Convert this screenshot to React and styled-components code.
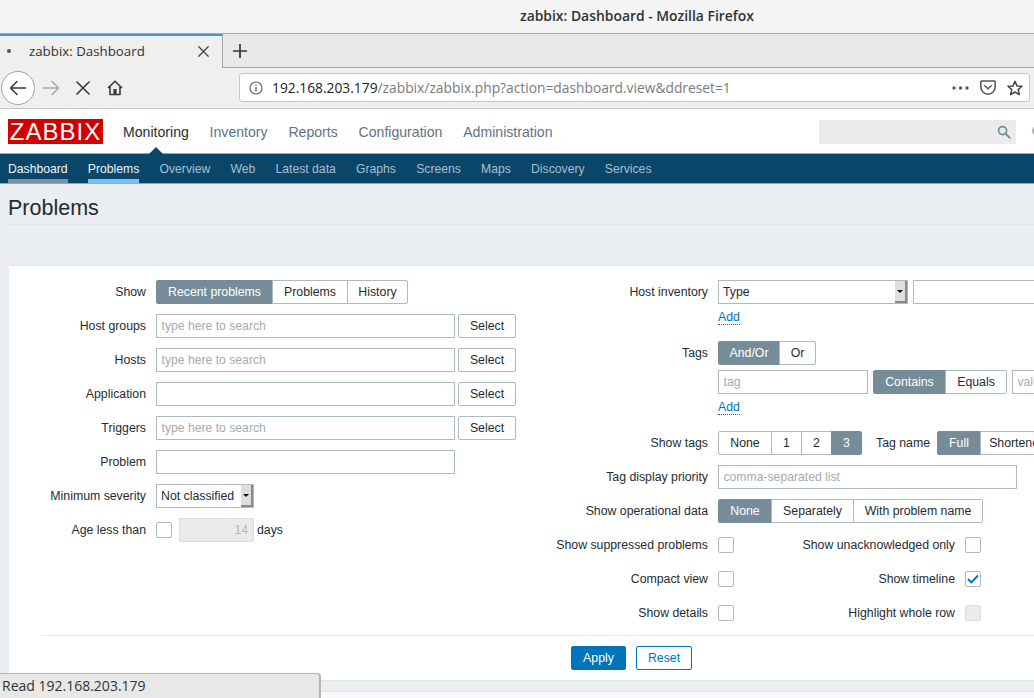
import React from 'react';
import styled, { createGlobalStyle } from 'styled-components';

const GlobalStyle = createGlobalStyle`
  html, body {
    margin: 0;
    padding: 0;
    overflow: hidden;
    background: #fff;
  }
  * {
    box-sizing: border-box;
  }
`;

const chromeFont = '"Open Sans", "Noto Sans", sans-serif';
const pageFont = '"Liberation Sans", Arial, sans-serif';

const Window = styled.div`
  position: relative;
  width: 1034px;
  height: 698px;
  overflow: hidden;
  font-family: ${pageFont};
  font-size: 12.3px;
  color: #1f2c33;
  background: #fff;
`;

/* browser chrome */
const TitleBar = styled.div`
  height: 34px;
  padding: 0 0 2px 520px;
  display: flex;
  align-items: center;
  background: #f5f5f5;
  border-bottom: 1px solid #a8a8a6;
  font-family: ${chromeFont};
  font-size: 13.9px;
  font-weight: 600;
  color: #2e3436;
  white-space: nowrap;
`;

const TabStrip = styled.div`
  height: 34px;
  display: flex;
  background: #e8e8e6;
  border-bottom: 1px solid #a8a8a6;
  font-family: ${chromeFont};
`;

const Tab = styled.div`
  width: 223px;
  height: 34px;
  padding: 0 13px 2px 7px;
  display: flex;
  align-items: center;
  background: #efefed;
  border-top: 2px solid #4a90d9;
  border-right: 1px solid #a8a8a6;
  font-size: 13.3px;
  color: #2e3436;
`;

const TabDot = styled.span`
  width: 4px;
  height: 4px;
  margin-right: 18px;
  border-radius: 50%;
  background: #555;
`;

const TabTitle = styled.span`
  flex: 1;
`;

const NewTab = styled.div`
  width: 34px;
  display: flex;
  align-items: center;
  justify-content: center;
`;

const Toolbar = styled.div`
  height: 41px;
  padding: 0 4px 1px 1px;
  display: flex;
  align-items: center;
  background: #efefed;
  border-bottom: 1px solid #c6c6c4;
  font-family: ${chromeFont};
`;

const BackButton = styled.div`
  width: 34px;
  height: 34px;
  display: flex;
  align-items: center;
  justify-content: center;
  background: #fff;
  border: 1px solid #a3a3a1;
  border-radius: 50%;
`;

const ToolIcon = styled.div`
  display: flex;
  align-items: center;
  justify-content: center;
  width: ${(p) => p.$w}px;
  height: 30px;
`;

const UrlBar = styled.div`
  width: 791px;
  height: 29px;
  margin-left: 108px;
  padding: 0 6px 0 9px;
  display: flex;
  align-items: center;
  background: #fff;
  border: 1px solid #c6c6c4;
  border-radius: 3px;
  font-size: 13.8px;
`;

const UrlText = styled.span`
  flex: 1;
  margin-left: 9px;
  color: #7b7b7b;
  white-space: nowrap;
`;

const UrlHost = styled.span`
  color: #222;
`;

const UrlIcons = styled.div`
  display: flex;
  align-items: center;
  gap: 11px;
`;

const StatusBar = styled.div`
  position: absolute;
  left: 0;
  bottom: 0;
  width: 321px;
  height: 25px;
  padding: 0 0 1px 2px;
  display: flex;
  align-items: center;
  background: #e8e8e6;
  border-top: 1px solid #b5b5b3;
  border-right: 2px solid #b5b5b3;
  border-top-right-radius: 4px;
  font-family: ${chromeFont};
  font-size: 14px;
  color: #2e3436;
`;

/* zabbix header */
const Header = styled.div`
  position: relative;
  height: 45px;
  padding: 10px 0 0 8px;
  display: flex;
  align-items: flex-start;
  background: #fff;
  border-bottom: 1px solid #8fa9b8;
`;

const Logo = styled.div`
  width: 95px;
  height: 25px;
  display: flex;
  align-items: center;
  justify-content: center;
  background: #d40000;
  color: #fff;
  font-size: 24px;
  letter-spacing: 1px;
  line-height: 25px;
`;

const MainNav = styled.nav`
  margin-left: 20px;
  height: 25px;
  display: flex;
  align-items: center;
  gap: 20.8px;
`;

const MainLink = styled.span`
  position: relative;
  font-size: 14.1px;
  color: ${(p) => (p.$active ? '#1f2c33' : '#5d7482')};

  ${(p) =>
    p.$active &&
    `&::after {
      content: '';
      position: absolute;
      left: 50%;
      bottom: -15px;
      margin-left: -8px;
      border-left: 8px solid transparent;
      border-right: 8px solid transparent;
      border-bottom: 8px solid #0a466a;
    }`}
`;

const SearchBox = styled.div`
  position: absolute;
  left: 819px;
  top: 11px;
  width: 197px;
  height: 24px;
  padding-right: 5px;
  display: flex;
  align-items: center;
  justify-content: flex-end;
  background: #ebebeb;
`;

const CutIcon = styled.div`
  position: absolute;
  left: 1032px;
  top: 17px;
  width: 10px;
  height: 10px;
  border: 2px solid #a3b3bc;
  border-radius: 50%;
`;

const SubNav = styled.nav`
  height: 30px;
  padding-left: 8px;
  display: flex;
  gap: 20.2px;
  background: #0a466a;
  border-bottom: 1px solid #8fa9b8;
`;

const SubLink = styled.span`
  height: 29px;
  padding-top: 8px;
  font-size: 12.2px;
  color: ${(p) => (p.$state ? '#f0f4f6' : '#a7bfcd')};
  border-bottom: 4px solid
    ${(p) => (p.$state === 'selected' ? '#78c1f1' : p.$state === 'home' ? '#7894a6' : 'transparent')};
`;

/* page */
const Page = styled.div`
  height: 515px;
  padding-left: 8px;
  background: #ebeef0;
`;

const PageTitle = styled.h1`
  height: 41px;
  margin: 0 0 40px;
  padding-top: 12px;
  border-bottom: 1px solid #e2e6e8;
  font-size: 21.5px;
  font-weight: 400;
  line-height: 24px;
  color: #1f2c33;
`;

const Panel = styled.div`
  width: 1245px;
  margin-left: 1px;
  height: 416px;
  padding-top: 14px;
  background: #fff;
  border-top: 1px solid #dfe4e7;
  border-bottom: 1px solid #dfe4e7;
`;

const Columns = styled.div`
  display: flex;
`;

const Column = styled.div`
  width: ${(p) => p.$w}px;
  flex: none;
  display: flex;
  flex-direction: column;
  gap: 10px;
`;

const Row = styled.div`
  display: flex;
  align-items: flex-start;
`;

const Label = styled.div`
  flex: none;
  width: ${(p) => p.$w}px;
  height: 24px;
  margin-right: 10px;
  text-align: right;
  line-height: 24px;
  white-space: nowrap;
`;

const TagLabel = styled(Label)`
  margin-right: 7px;
`;

const Stack = styled.div`
  display: flex;
  flex-direction: column;
`;

const Line = styled.div`
  display: flex;
  align-items: center;
  gap: ${(p) => p.$gap || 0}px;
  margin-top: ${(p) => p.$top || 0}px;
  height: 24px;
`;

const AddLine = styled.div`
  height: 27px;
  padding-top: 6px;
`;

const AddLink = styled.a`
  color: #0275b8;
  line-height: 14px;
  display: inline-block;
  border-bottom: 1px dotted #0275b8;
`;

const TextInput = styled.input`
  width: ${(p) => p.$w}px;
  height: 24px;
  padding: 0 4.5px;
  flex: none;
  background: #fff;
  border: 1px solid #acbbc2;
  border-radius: 0;
  outline: none;
  font-family: ${pageFont};
  font-size: 12.2px;
  color: #1f2c33;

  &::placeholder {
    color: #a5abae;
    opacity: 1;
  }
`;

const NumberInput = styled(TextInput)`
  margin-left: 7px;
  text-align: right;
  padding-right: 5px;
  background: #ebebeb;
  border-color: #dcdfe1;
  color: #acbbc2;
`;

const Button = styled.button`
  flex: none;
  height: 24px;
  padding: 0;
  width: ${(p) => p.$w}px;
  background: ${(p) => (p.$primary ? '#0275b8' : '#fff')};
  border: 1px solid ${(p) => (p.$primary ? '#0275b8' : p.$blue ? '#0275b8' : '#acbbc2')};
  border-radius: 2px;
  font-family: ${pageFont};
  font-size: 12.3px;
  color: ${(p) => (p.$primary ? '#fff' : p.$blue ? '#0275b8' : '#1f2c33')};
`;

const SelectButton = styled(Button)`
  margin-left: 3px;
`;

const Segments = styled.div`
  display: flex;
  flex: none;
`;

const Segment = styled.span`
  width: ${(p) => p.$w}px;
  height: 24px;
  flex: none;
  display: flex;
  align-items: center;
  justify-content: center;
  background: ${(p) => (p.$active ? '#768d99' : '#fff')};
  color: ${(p) => (p.$active ? '#fff' : '#1f2c33')};
  border: 1px solid ${(p) => (p.$active ? '#768d99' : '#acbbc2')};
  margin-left: -1px;
  white-space: nowrap;

  &:first-child {
    margin-left: 0;
    border-radius: 2px 0 0 2px;
  }
  &:last-child {
    border-radius: 0 2px 2px 0;
  }
`;

const Select = styled.div`
  width: ${(p) => p.$w}px;
  height: 24px;
  flex: none;
  padding-left: 4px;
  display: flex;
  align-items: center;
  justify-content: space-between;
  background: #fff;
  border: 1px solid #acbbc2;
`;

const SelectArrow = styled.span`
  position: relative;
  width: 12px;
  height: 22px;
  flex: none;
  background: #dedede;
  border-right: 2px solid #8a8a8a;
  border-bottom: 2px solid #8a8a8a;

  &::after {
    content: '';
    position: absolute;
    left: 2px;
    top: 9px;
    border-left: 3px solid transparent;
    border-right: 3px solid transparent;
    border-top: 3px solid #111;
  }
`;

const Checkbox = styled.span`
  width: 16px;
  height: 16px;
  flex: none;
  display: flex;
  align-items: center;
  justify-content: center;
  background: ${(p) => (p.$disabled ? '#ebebeb' : '#fff')};
  border: 1px solid ${(p) => (p.$disabled ? '#dcdfe1' : '#acbbc2')};
  border-radius: 2px;
`;

const CheckCell = styled.div`
  height: 24px;
  width: ${(p) => p.$w || 16}px;
  flex: none;
  display: flex;
  align-items: center;
`;

const Days = styled.span`
  margin-left: 3px;
`;

const Separator = styled.div`
  margin: 10px 0 0 32px;
  border-top: 1px solid #ebeef0;
`;

const Actions = styled.div`
  padding-top: 10px;
  display: flex;
  justify-content: center;
  gap: 10px;
`;

const Footer = styled.div`
  height: 8px;
  margin: 10px 0 0 -8px;
  background: #f8f9fa;
  border-top: 1px solid #dfe4e7;
`;

const Line2 = (props) => <svg fill="none" strokeLinecap="round" strokeLinejoin="round" {...props} />;

const ArrowLeftIcon = () => (
  <Line2 width="18" height="16" viewBox="0 0 18 16" stroke="#3a3a3a" strokeWidth="1.6">
    <path d="M16.5 8H1.5M8 1.5 1.5 8 8 14.5" />
  </Line2>
);

const ArrowRightIcon = () => (
  <Line2 width="18" height="16" viewBox="0 0 18 16" stroke="#a9a9a9" strokeWidth="1.6">
    <path d="M1.5 8h15M10 1.5 16.5 8 10 14.5" />
  </Line2>
);

const CrossIcon = ({ size = 14, color = '#3a3a3a' }) => (
  <Line2 width={size} height={size} viewBox="0 0 14 14" stroke={color} strokeWidth="1.6">
    <path d="M1 1l12 12M13 1 1 13" />
  </Line2>
);

const HomeIcon = () => (
  <svg width="16" height="16" viewBox="0 0 16 16" fill="none" stroke="#3a3a3a" strokeWidth="1.6" strokeLinejoin="round">
    <path d="M1 8 8 1.2 15 8M3 6.5V14.5H13V6.5" />
    <rect x="6.4" y="9" width="3.2" height="5.5" fill="#3a3a3a" stroke="none" />
  </svg>
);

const PlusIcon = () => (
  <svg width="14" height="14" viewBox="0 0 14 14" stroke="#333" strokeWidth="1.7">
    <path d="M7 0v14M0 7h14" />
  </svg>
);

const InfoIcon = () => (
  <svg width="14" height="14" viewBox="0 0 14 14" fill="none" stroke="#6a6a6a" strokeWidth="1.2">
    <circle cx="7" cy="7" r="6" />
    <path d="M7 6v4.4M7 3.4v1.4" strokeWidth="1.4" />
  </svg>
);

const DotsIcon = () => (
  <svg width="17" height="4" viewBox="0 0 17 4" fill="#5a5a5a">
    <circle cx="2" cy="2" r="1.7" />
    <circle cx="8.5" cy="2" r="1.7" />
    <circle cx="15" cy="2" r="1.7" />
  </svg>
);

const PocketIcon = () => (
  <svg width="16" height="15" viewBox="0 0 16 15" fill="none" stroke="#555" strokeWidth="1.5" strokeLinecap="round" strokeLinejoin="round">
    <path d="M1.6 1h12.8c.4 0 .8.3.8.8V7a7.2 7.2 0 0 1-14.4 0V1.8c0-.5.4-.8.8-.8Z" />
    <path d="M4.8 5.8 8 8.8l3.2-3" />
  </svg>
);

const StarIcon = () => (
  <svg width="16" height="16" viewBox="0 0 16 16" fill="none" stroke="#444" strokeWidth="1.5" strokeLinejoin="round">
    <path d="M8 1.2 10 5.9l5 .4-3.8 3.3 1.2 5L8 12 3.6 14.6l1.2-5L1 6.3l5-.4Z" />
  </svg>
);

const SearchIcon = () => (
  <svg width="14" height="14" viewBox="0 0 14 14" fill="none" stroke="#768d99" strokeWidth="1.7" strokeLinecap="round">
    <circle cx="5.6" cy="5.6" r="4" />
    <path d="M8.7 8.7 12.6 12.6" strokeWidth="2" />
  </svg>
);

const CheckIcon = () => (
  <svg width="12" height="10" viewBox="0 0 12 10" fill="none" stroke="#0275b8" strokeWidth="2">
    <path d="M1 5l3.4 3.4L11 1.5" />
  </svg>
);

const mainLinks = ['Monitoring', 'Inventory', 'Reports', 'Configuration', 'Administration'];
const subLinks = ['Dashboard', 'Problems', 'Overview', 'Web', 'Latest data', 'Graphs', 'Screens', 'Maps', 'Discovery', 'Services'];

const Seg = ({ items }) => (
  <Segments>
    {items.map(([text, width, active]) => (
      <Segment key={text} $w={width} $active={active}>
        {text}
      </Segment>
    ))}
  </Segments>
);

const PickerRow = ({ label, placeholder }) => (
  <Row>
    <Label $w={137}>{label}</Label>
    <TextInput $w={299} placeholder={placeholder} readOnly />
    <SelectButton $w={58}>Select</SelectButton>
  </Row>
);

const CheckRow = ({ label, other, otherChecked, otherDisabled }) => (
  <Row>
    <Label $w={168}>{label}</Label>
    <CheckCell>
      <Checkbox />
    </CheckCell>
    <Label $w={221}>{other}</Label>
    <CheckCell>
      <Checkbox $disabled={otherDisabled}>{otherChecked && <CheckIcon />}</Checkbox>
    </CheckCell>
  </Row>
);

export default function App() {
  return (
    <Window>
      <GlobalStyle />
      <TitleBar>zabbix: Dashboard - Mozilla Firefox</TitleBar>
      <TabStrip>
        <Tab>
          <TabDot />
          <TabTitle>zabbix: Dashboard</TabTitle>
          <CrossIcon size={11} color="#444" />
        </Tab>
        <NewTab>
          <PlusIcon />
        </NewTab>
      </TabStrip>
      <Toolbar>
        <BackButton>
          <ArrowLeftIcon />
        </BackButton>
        <ToolIcon $w={32}>
          <ArrowRightIcon />
        </ToolIcon>
        <ToolIcon $w={32}>
          <CrossIcon />
        </ToolIcon>
        <ToolIcon $w={32}>
          <HomeIcon />
        </ToolIcon>
        <UrlBar>
          <InfoIcon />
          <UrlText>
            <UrlHost>192.168.203.179</UrlHost>/zabbix/zabbix.php?action=dashboard.view&amp;ddreset=1
          </UrlText>
          <UrlIcons>
            <DotsIcon />
            <PocketIcon />
            <StarIcon />
          </UrlIcons>
        </UrlBar>
      </Toolbar>

      <Header>
        <Logo>ZABBIX</Logo>
        <MainNav>
          {mainLinks.map((link, i) => (
            <MainLink key={link} $active={i === 0}>
              {link}
            </MainLink>
          ))}
        </MainNav>
        <SearchBox>
          <SearchIcon />
        </SearchBox>
        <CutIcon />
      </Header>
      <SubNav>
        {subLinks.map((link, i) => (
          <SubLink key={link} $state={i === 0 ? 'home' : i === 1 ? 'selected' : undefined}>
            {link}
          </SubLink>
        ))}
      </SubNav>

      <Page>
        <PageTitle>Problems</PageTitle>
        <Panel>
          <Columns>
            <Column $w={531}>
              <Row>
                <Label $w={137}>Show</Label>
                <Seg items={[['Recent problems', 117, true], ['Problems', 76], ['History', 61]]} />
              </Row>
              <PickerRow label="Host groups" placeholder="type here to search" />
              <PickerRow label="Hosts" placeholder="type here to search" />
              <PickerRow label="Application" />
              <PickerRow label="Triggers" placeholder="type here to search" />
              <Row>
                <Label $w={137}>Problem</Label>
                <TextInput $w={299} readOnly />
              </Row>
              <Row>
                <Label $w={137}>Minimum severity</Label>
                <Select $w={98}>
                  Not classified
                  <SelectArrow />
                </Select>
              </Row>
              <Row>
                <Label $w={137}>Age less than</Label>
                <CheckCell>
                  <Checkbox />
                </CheckCell>
                <NumberInput $w={75} value="14" readOnly />
                <Line>
                  <Days>days</Days>
                </Line>
              </Row>
            </Column>
            <Column $w={700}>
              <Row>
                <Label $w={168}>Host inventory</Label>
                <Stack>
                  <Line $gap={5}>
                    <Select $w={190}>
                      Type
                      <SelectArrow />
                    </Select>
                    <TextInput $w={188} readOnly />
                  </Line>
                  <AddLine>
                    <AddLink>Add</AddLink>
                  </AddLine>
                </Stack>
              </Row>
              <Row>
                <Label $w={168}>Tags</Label>
                <Stack>
                  <Line>
                    <Seg items={[['And/Or', 62, true], ['Or', 37]]} />
                  </Line>
                  <Line $gap={5} $top={5}>
                    <TextInput $w={150} placeholder="tag" readOnly />
                    <Seg items={[['Contains', 73, true], ['Equals', 62]]} />
                    <TextInput $w={150} placeholder="value" readOnly />
                  </Line>
                  <AddLine>
                    <AddLink>Add</AddLink>
                  </AddLine>
                </Stack>
              </Row>
              <Row>
                <Label $w={168}>Show tags</Label>
                <Line>
                  <Seg items={[['None', 54], ['1', 31], ['2', 31], ['3', 31, true]]} />
                  <TagLabel $w={68}>Tag name</TagLabel>
                  <Seg items={[['Full', 44, true], ['Shortened', 75]]} />
                </Line>
              </Row>
              <Row>
                <Label $w={168}>Tag display priority</Label>
                <TextInput $w={299} placeholder="comma-separated list" readOnly />
              </Row>
              <Row>
                <Label $w={168}>Show operational data</Label>
                <Seg items={[['None', 54, true], ['Separately', 83], ['With problem name', 130]]} />
              </Row>
              <CheckRow label="Show suppressed problems" other="Show unacknowledged only" />
              <CheckRow label="Compact view" other="Show timeline" otherChecked />
              <CheckRow label="Show details" other="Highlight whole row" otherDisabled />
            </Column>
          </Columns>
          <Separator />
          <Actions>
            <Button $primary $w={55}>Apply</Button>
            <Button $blue $w={56}>Reset</Button>
          </Actions>
        </Panel>
        <Footer />
      </Page>
      <StatusBar>Read 192.168.203.179</StatusBar>
    </Window>
  );
}
